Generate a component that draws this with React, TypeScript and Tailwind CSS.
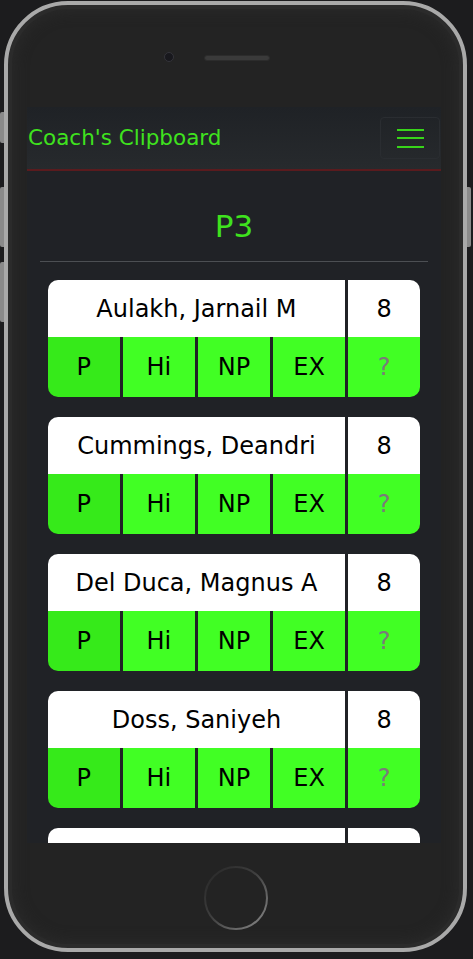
import React from 'react';

const PLAYERS = [
  { name: 'Aulakh, Jarnail M', score: 8 },
  { name: 'Cummings, Deandri', score: 8 },
  { name: 'Del Duca, Magnus A', score: 8 },
  { name: 'Doss, Saniyeh', score: 8 },
];

const ACTIONS = ['P', 'Hi', 'NP', 'EX'];

const font = { fontFamily: '"DejaVu Sans", "Liberation Sans", sans-serif' };

const PlayerCard: React.FC<{ name?: string; score?: number }> = ({ name, score }) => (
  <div className="mx-[21px] mb-[20px] grid grid-cols-5 gap-x-[3.5px] rounded-[10px] overflow-hidden bg-[#202226] shrink-0">
    <div className="col-span-4 h-[57px] bg-white flex items-center justify-center text-[24px] text-black">{name}</div>
    <div className="h-[57px] bg-white flex items-center justify-center text-[24px] text-black">{score}</div>
    {ACTIONS.map((a, i) => (
      <button
        key={a}
        className={`h-[60px] flex items-center justify-center text-[24px] text-black ${i === 0 ? 'bg-[#36ea1a]' : 'bg-[#41ff24]'}`}
      >
        {name ? a : ''}
      </button>
    ))}
    <button className="h-[60px] bg-[#41ff24] flex items-center justify-center text-[24px] text-[#7a7a7a]">{name ? '?' : ''}</button>
  </div>
);

export default function App() {
  return (
    <div className="relative w-[473px] h-[959px] bg-[#1c1c1e] overflow-hidden" style={font}>
      {/* side buttons */}
      <div className="absolute left-0 top-[112px] w-[5px] h-[31px] rounded-l-[2px] bg-[#8a8a8a]" />
      <div className="absolute left-0 top-[187px] w-[5px] h-[60px] rounded-l-[2px] bg-[#8a8a8a]" />
      <div className="absolute left-0 top-[262px] w-[5px] h-[60px] rounded-l-[2px] bg-[#8a8a8a]" />
      <div className="absolute left-[466px] top-[187px] w-[5px] h-[60px] rounded-r-[2px] bg-[#8a8a8a]" />

      <div className="relative ml-[4px] mt-[1px] w-[463px] h-[951px] rounded-[64px] border-[4px] border-[#a9a9a9] bg-[#232323] shadow-[inset_0_0_0_4px_#2b2b2b,inset_0_0_14px_6px_#2a2a2a] flex flex-col">
        {/* top bezel */}
        <div className="h-[102px] flex items-start pl-[156px] pt-[45px] gap-[30px]">
          <div className="mt-[2px] w-[10px] h-[10px] rounded-full bg-[#18181d] border border-[#34343a]" />
          <div className="mt-[5px] w-[66px] h-[6px] rounded-full bg-[#3a3a3a] border border-[#2c2c2c]" />
        </div>

        {/* screen */}
        <div className="ml-[19px] w-[414px] h-[736px] bg-[#202226] overflow-hidden flex flex-col">
          <div className="h-[64px] shrink-0 flex items-center justify-between bg-gradient-to-b from-[#1f2226] to-[#272a2d] border-b-2 border-[#5a1b1e]">
            <span className="ml-[1px] text-[21.5px] text-[#3fe21e]">Coach's Clipboard</span>
            <button className="mr-[1px] w-[60px] h-[42px] rounded-[4px] border border-[#2a2d31] flex flex-col items-center justify-center gap-[6.5px]">
              <span className="block w-[27px] h-[2px] bg-[#38d51a]" />
              <span className="block w-[27px] h-[2px] bg-[#38d51a]" />
              <span className="block w-[27px] h-[2px] bg-[#38d51a]" />
            </button>
          </div>

          <div className="h-[90px] shrink-0 flex items-center justify-center text-[31px] text-[#3fe21e] pt-[21px]">P3</div>
          <div className="mx-[13px] h-px bg-[#4c4f53] shrink-0 mb-[18px]" />

          {PLAYERS.map((p) => (
            <PlayerCard key={p.name} name={p.name} score={p.score} />
          ))}
          <PlayerCard />
        </div>

        {/* bottom bezel with home button */}
        <div className="flex-1 flex items-center justify-center pt-[4px]">
          <svg width="68" height="68" viewBox="0 0 68 68">
            <defs>
              <linearGradient id="ring" x1="0" y1="0" x2="1" y2="1">
                <stop offset="0" stopColor="#262626" />
                <stop offset="0.45" stopColor="#3e3e3e" />
                <stop offset="1" stopColor="#8a8a8a" />
              </linearGradient>
            </defs>
            <circle cx="34" cy="34" r="31" fill="none" stroke="url(#ring)" strokeWidth="2" />
          </svg>
        </div>
      </div>
    </div>
  );
}
